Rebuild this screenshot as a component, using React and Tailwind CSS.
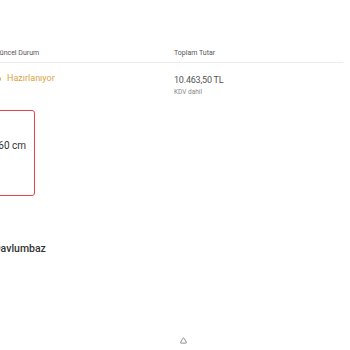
import { Triangle } from 'lucide-react'

const font = { fontFamily: 'Roboto, "Liberation Sans", sans-serif' }

export default function App() {
  return (
    <div className="w-[350px] h-[350px] overflow-hidden bg-white" style={font}>
      <div className="-ml-[5px] w-[348px] pt-[48px]">
        {/* table header */}
        <div className="flex border-b border-[#ececec] pb-[3px] text-[7px] text-[#555]">
          <div className="w-[179px]">Güncel Durum</div>
          <div>Toplam Tutar</div>
        </div>

        {/* table row */}
        <div className="flex pt-[9px]">
          <div className="w-[179px] flex items-center gap-[4px] h-[14px] text-[9px] text-[#d9a441]">
            <span className="w-[6px] h-[6px] rounded-full border border-[#d9a441]" />
            <span className="ml-[2px]">Hazırlanıyor</span>
          </div>
          <div className="flex flex-col">
            <span className="text-[9px] tracking-[-0.2px] text-[#555] leading-[16px]">10.463,50 TL</span>
            <span className="text-[6.5px] text-[#888] leading-[8px]">KDV dahil</span>
          </div>
        </div>
      </div>

      {/* selected option card */}
      <div className="-ml-[40px] mt-[14px] w-[75px] h-[86px] border-[1.5px] border-[#e0454b] rounded-[3px] flex items-start justify-end pr-[8px] pt-[27px]">
        <span className="text-[10px] text-[#333]">160 cm</span>
      </div>

      <div className="-ml-[41px] mt-[45px] text-[10.5px] font-medium text-[#333]">Pervaz Davlumbaz</div>

      <div className="mt-[81px] flex justify-center pl-[16px]">
        <Triangle className="w-[7px] h-[7px] text-[#666]" strokeWidth={2.5} />
      </div>
    </div>
  )
}
